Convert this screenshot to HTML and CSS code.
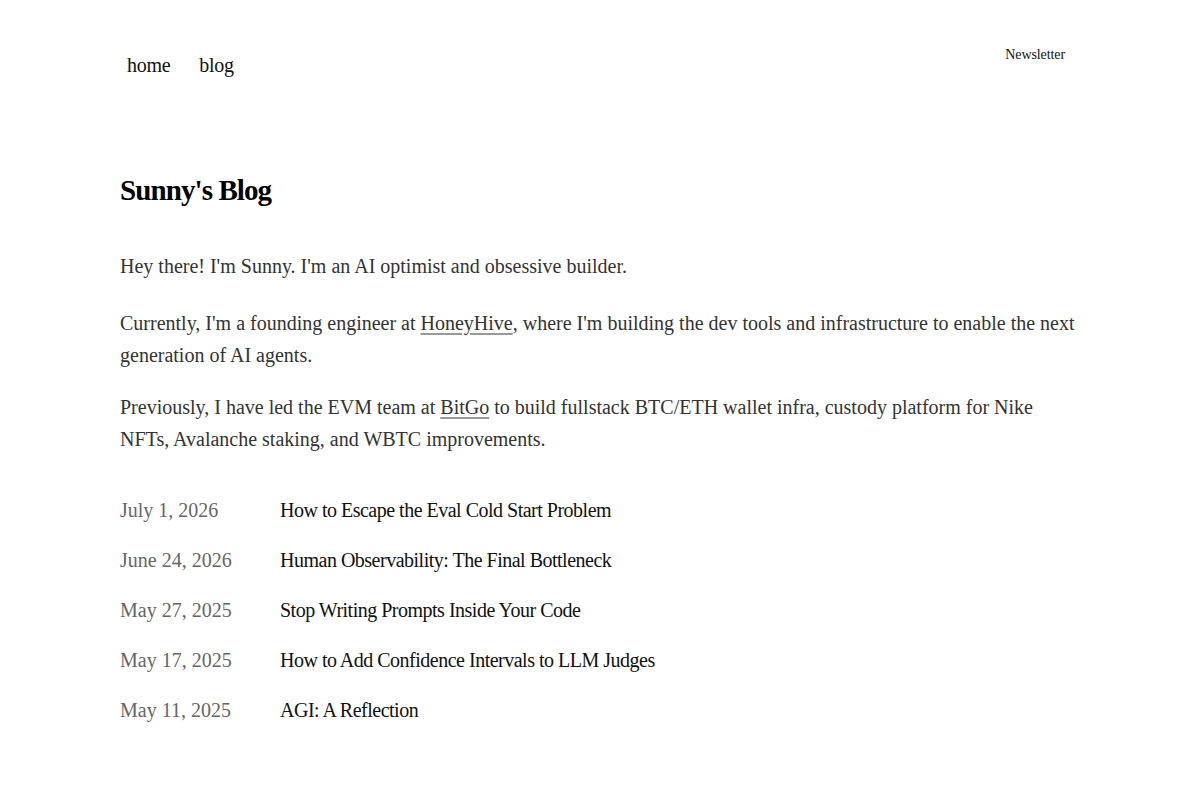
FILE: index.html
```html
<!DOCTYPE html>
<html lang="en">
<head>
<meta charset="utf-8">
<title>Sunny's Blog</title>
<link rel="stylesheet" href="styles.css">
</head>
<body>
<div class="page">
  <header class="top">
    <nav class="nav">
      <a href="#" class="nav-link">home</a>
      <a href="#" class="nav-link">blog</a>
    </nav>
    <a href="#" class="newsletter">Newsletter</a>
  </header>
  <main class="main">
    <h1 class="title">Sunny's Blog</h1>
    <p class="intro first">Hey there! I'm Sunny. I'm an AI optimist and obsessive builder.</p>
    <p class="intro">Currently, I'm a founding engineer at <a href="#" class="ulink">HoneyHive</a>, where I'm building the dev tools and infrastructure to enable the next generation of AI agents.</p>
    <p class="intro">Previously, I have led the EVM team at <a href="#" class="ulink">BitGo</a> to build fullstack BTC/ETH wallet infra, custody platform for Nike NFTs, Avalanche staking, and WBTC improvements.</p>
    <ul class="posts">
      <li class="post"><span class="date">July 1, 2026</span><a href="#" class="post-title">How to Escape the Eval Cold Start Problem</a></li>
      <li class="post"><span class="date">June 24, 2026</span><a href="#" class="post-title">Human Observability: The Final Bottleneck</a></li>
      <li class="post"><span class="date">May 27, 2025</span><a href="#" class="post-title">Stop Writing Prompts Inside Your Code</a></li>
      <li class="post"><span class="date">May 17, 2025</span><a href="#" class="post-title">How to Add Confidence Intervals to LLM Judges</a></li>
      <li class="post"><span class="date">May 11, 2025</span><a href="#" class="post-title">AGI: A Reflection</a></li>
    </ul>
  </main>
</div>
</body>
</html>
```

FILE: styles.css
```css
html, body {
  margin: 0;
  padding: 0;
  background: #fff;
}
body {
  font-family: "Liberation Serif", "Times New Roman", serif;
  color: #111;
}
.page {
  width: 960px;
  margin: 0 auto;
}
.top {
  display: flex;
  justify-content: space-between;
  align-items: flex-start;
  padding-top: 43px;
}
.nav {
  display: flex;
  gap: 29px;
  padding-left: 7px;
  padding-top: 9px;
}
.nav-link {
  font-size: 20px;
  line-height: 26px;
  color: #111;
  text-decoration: none;
  letter-spacing: -0.3px;
}
.newsletter {
  font-size: 14px;
  line-height: 24px;
  color: #111;
  text-decoration: none;
  letter-spacing: -0.1px;
  padding-right: 15px;
}
.main {
  padding-top: 95px;
}
.title {
  font-size: 29px;
  line-height: 34px;
  font-weight: bold;
  letter-spacing: -0.9px;
  margin: 0 0 43px;
  color: #000;
}
.intro {
  font-size: 20px;
  line-height: 32px;
  color: #333;
  margin: 0 0 20px;
}
.intro.first {
  margin-bottom: 25px;
}
.ulink {
  color: #333;
  text-decoration: underline;
  text-decoration-color: #999;
  text-underline-offset: 3px;
}
.posts {
  list-style: none;
  margin: 42px 0 0;
  padding: 0;
}
.post {
  display: flex;
  height: 50px;
  align-items: flex-start;
  font-size: 20px;
  line-height: 26px;
}
.date {
  width: 160px;
  color: #666;
}
.post-title {
  color: #111;
  text-decoration: none;
  letter-spacing: -0.5px;
}
```
